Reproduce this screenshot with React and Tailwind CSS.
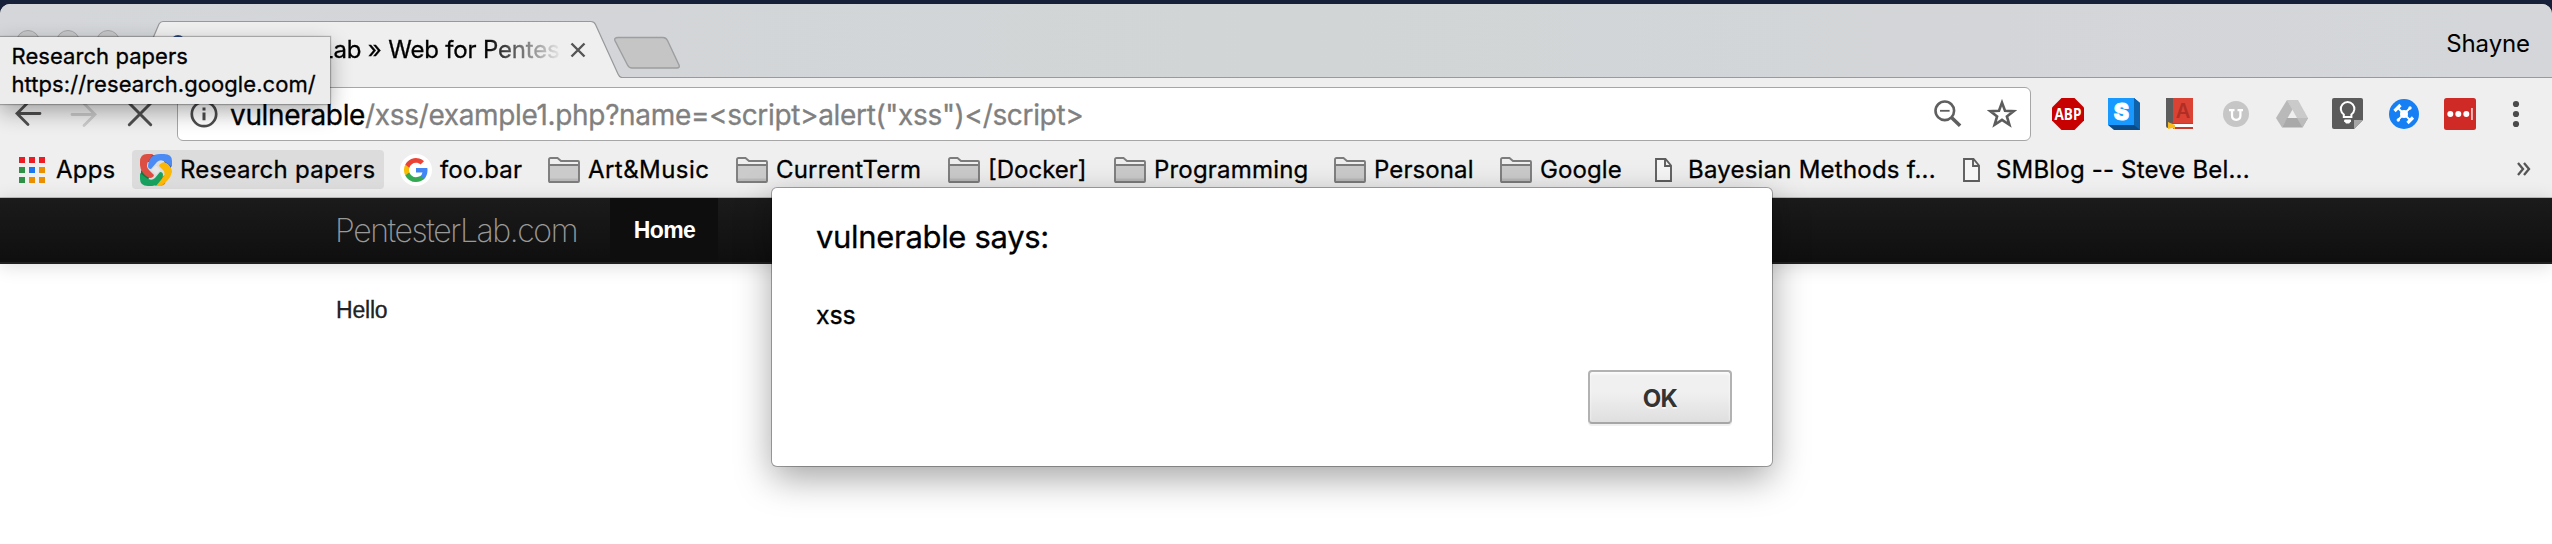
import React from 'react';

const BackIcon = ({ className }) => (
  <svg viewBox="0 0 28 28" className={`h-7 w-7 shrink-0 ${className}`} fill="none" stroke="currentColor" strokeWidth="2.8" strokeLinecap="round">
    <path d="M26 13.5H3M14 2.5L3 13.5l11 11" />
  </svg>
);

const StopIcon = () => (
  <svg viewBox="0 0 28 28" className="h-7 w-7 shrink-0 text-[#4f4f4f]" fill="none" stroke="currentColor" strokeWidth="3" strokeLinecap="round">
    <path d="M3.3 3.3l21.4 21.4M24.7 3.3L3.3 24.7" />
  </svg>
);

const InfoIcon = () => (
  <svg viewBox="0 0 28 28" className="h-7 w-7 shrink-0" fill="none" stroke="#4c4c4c" strokeWidth="2.7">
    <circle cx="14" cy="14" r="12.2" />
    <path d="M14 12.4v7.8M14 7.6v3" strokeWidth="3" />
  </svg>
);

const ZoomOutIcon = () => (
  <svg viewBox="0 0 28 28" className="h-7 w-7 shrink-0" fill="none" stroke="#5f5f5f" strokeWidth="2.6">
    <circle cx="10.8" cy="10.8" r="9.3" />
    <path d="M6 10.8h9.6" strokeWidth="1.8" />
    <path d="M17.5 17.5l8.6 8.3" strokeWidth="3.6" />
  </svg>
);

const StarIcon = () => (
  <svg viewBox="0 0 30 30" className="h-[30px] w-[30px] shrink-0" fill="none" stroke="#5c5c5c" strokeWidth="2.6">
    <path d="M15 3.6l3 8.2 8.8.3-6.9 5.3 2.5 8.4-7.4-4.9-7.4 4.9 2.5-8.4-6.9-5.3 8.8-.3z" />
  </svg>
);

const AppsIcon = () => (
  <svg viewBox="0 0 26 26" className="h-[26px] w-[26px] shrink-0">
    <path fill="#ed1c24" d="M0 0h6v6H0zM10 0h6v6h-6zM20 0h6v6h-6z" />
    <path fill="#2f9146" d="M0 10h6v6H0zM0 20h6v6H0z" />
    <path fill="#1c76f2" d="M10 10h6v6h-6z" />
    <path fill="#ea8f00" d="M20 10h6v6h-6zM10 20h6v6h-6zM20 20h6v6h-6z" />
  </svg>
);

const ResearchIcon = () => (
  <svg viewBox="0 0 32 32" className="h-8 w-8 shrink-0">
    <path fill="#b5382c" d="M8 1h9l-5 7H6z" />
    <path fill="#2a56c6" d="M31 9v9l-5-5-2-6z" />
    <path fill="#f57c00" d="M25 30q-4 3-10 2l6-9 6-3z" />
    <path fill="#0a7a43" d="M1 16q-1 10 5 14l4-8z" />
    <path fill="#17a05e" d="M23 21q-1 11-11 11H8q-8 0-8-7v-6l5 4q6 5 10 1l5-6q3 0 3 3z" />
    <path fill="#f9b707" d="M22 9q2-2 6 1 4 4 4 8-1 5-5 9l-6 5h-5l5-6q6-6 2-10l-4-4q0-2 3-3z" />
    <path fill="#4a8af4" d="M8 12Q9 0 20 0h4q8 0 8 7v6l-5-4q-6-5-10-1l-6 7q-3 0-3-3z" />
    <path fill="#dc4e41" d="M11 24q-4 0-8-5-3-4-3-8V8q0-8 7-8h6L9 6q-4 6 0 10l5 5q0 2-3 3z" />
    <path fill="#e6e6e6" d="M16 11.500l4.500 4.500-4.500 4.500-4.500-4.500z" />
  </svg>
);

const GoogleIcon = () => (
  <svg viewBox="0 0 32 32" className="h-8 w-8 shrink-0">
    <circle cx="16" cy="16" r="16" fill="#fff" />
    <g transform="translate(4 4)">
      <path fill="#4285f4" d="M23.5 12.3c0-.8-.1-1.6-.2-2.3H12v4.6h6.5a5.5 5.5 0 0 1-2.4 3.6v3h3.9c2.2-2.1 3.5-5.1 3.5-8.9z" />
      <path fill="#34a853" d="M12 24c3.200 0 6-1.100 8-2.900l-3.900-3c-1.100.7-2.500 1.200-4.100 1.200-3.100 0-5.800-2.100-6.700-5H1.300v3.100A12 12 0 0 0 12 24z" />
      <path fill="#fbbc05" d="M5.300 14.300a7.200 7.200 0 0 1 0-4.600V6.600H1.300a12 12 0 0 0 0 10.800z" />
      <path fill="#ea4335" d="M12 4.800c1.800 0 3.300.6 4.600 1.800L20 3.200A12 12 0 0 0 1.300 6.600l4 3.100c.9-2.800 3.600-4.900 6.700-4.900z" />
    </g>
  </svg>
);

const FolderIcon = () => (
  <svg viewBox="0 0 32 26" className="h-[26px] w-8 shrink-0">
    <path d="M1 7.500h30V25H1z" fill="#cbcbcb" />
    <path d="M1 21.500h30V25H1z" fill="#b8b8b8" />
    <path d="M1 24V2.500Q1 1 2.500 1h7L13 4h17q1 0 1 1v19q0 1-1 1H2q-1 0-1-1zM1 8h30" fill="none" stroke="#7c7c7c" strokeWidth="1.900" />
  </svg>
);

const PageIcon = () => (
  <svg viewBox="0 0 18 24" className="h-6 w-[18px] shrink-0" fill="#f6f6f6" stroke="#5d5d5d" strokeWidth="1.900">
    <path d="M1 1h9.500L16 7.500V23H1zM10 1v7h6" />
  </svg>
);

const AbpIcon = () => (
  <svg viewBox="0 0 32 32" className="h-8 w-8 shrink-0">
    <path d="M9.500 0h13L32 9.500v13L22.500 32h-13L0 22.500v-13z" fill="#c70000" />
    <text x="16" y="21.500" textAnchor="middle" textLength="27" lengthAdjust="spacingAndGlyphs" fontSize="15.500" fontWeight="700" fill="#fff" stroke="none" className="font-['Open_Sans',sans-serif]">ABP</text>
  </svg>
);

const SIcon = () => (
  <svg viewBox="0 0 32 32" className="h-8 w-8 shrink-0">
    <path d="M26 0l6 5v27H6l-6-5z" fill="#0a4a86" />
    <path d="M26 0l6 5v27l-6-5z" fill="#0d62ab" />
    <path d="M0 0h26v27H0z" fill="#1799ff" />
    <text x="13.300" y="21.500" textAnchor="middle" fontSize="23" fontWeight="900" fill="#fff" stroke="#fff" strokeWidth="0.800" className="font-['Inter',sans-serif]">S</text>
  </svg>
);

const BookIcon = () => (
  <svg viewBox="0 0 28 32" className="h-8 w-7 shrink-0">
    <path d="M0 0h7v30H2q-2 0-2-2z" fill="#5c5c5c" />
    <path d="M6 25h21v4H6z" fill="#fafafa" />
    <path d="M5 24.500h22v1.500H5zM7 29h20v2H7z" fill="#c53a2c" />
    <path d="M7 0h20v25H7z" fill="#dc4234" />
    <text x="17" y="20" textAnchor="middle" fontSize="20" fontWeight="600" fill="#b02e24" className="font-['Inter',sans-serif]">A</text>
    <path d="M2 24l7 3v4l-3-1-4 1z" fill="#f8bc1c" />
  </svg>
);

const UIcon = () => (
  <svg viewBox="0 0 26 26" className="h-[26px] w-[26px] shrink-0">
    <circle cx="13" cy="13" r="13" fill="#c6c6c6" />
    <path d="M6 9.200h5.500M14.500 9.200H20M9 9.200v5.300q0 4.300 4.200 4.300t4.200-4.300V9.200" fill="none" stroke="#fff" strokeWidth="2.300" />
  </svg>
);

const DriveIcon = () => (
  <svg viewBox="0 0 32 28" className="h-7 w-8 shrink-0">
    <path d="M11 0h11l10 18H21z" fill="#cacaca" />
    <path d="M11 0l5.500 9.500L6 27.500 0 18z" fill="#b9b9b9" />
    <path d="M11 18h21l-5.500 9.500H6z" fill="#a9a9a9" />
    <path d="M21 18h11l-5.500 9.500z" fill="#bcbcbc" />
  </svg>
);

const KeepIcon = () => (
  <svg viewBox="0 0 32 32" className="h-8 w-8 shrink-0">
    <path d="M2 0h27q2 0 2 2v20l-9 9H2q-2 0-2-2V2q0-2 2-2z" fill="#5b5b5b" />
    <path d="M22 31v-9h9z" fill="#a5a5a5" />
    <path d="M11.800 19v-2.500a6.800 6.800 0 1 1 7.600 0V19zM12.300 23h6.600" fill="none" stroke="#fff" strokeWidth="2" />
    <path d="M12.500 21.500h6.200v2l-1.500 2h-3.200l-1.500-2z" fill="#fff" />
  </svg>
);

const HubIcon = () => (
  <svg viewBox="0 0 30 30" className="h-[30px] w-[30px] shrink-0">
    <circle cx="15" cy="15" r="15" fill="#157ff3" />
    <g stroke="#fff" fill="#fff">
      <circle cx="15" cy="15" r="4" stroke="none" />
      <path d="M9 9l12 12M20.500 9.500l-11 11" strokeWidth="1.800" />
      <path d="M5.500 12l6-6M18.500 24l5.500-5.500" strokeWidth="3.200" />
      <circle cx="21" cy="9" r="1.700" stroke="none" />
      <circle cx="9.300" cy="21" r="1.700" stroke="none" />
    </g>
  </svg>
);

const PassIcon = () => (
  <svg viewBox="0 0 32 32" className="h-8 w-8 shrink-0">
    <rect width="32" height="32" rx="2.500" fill="#cf2a25" />
    <g fill="#fff">
      <circle cx="6.300" cy="16" r="3" />
      <circle cx="14.300" cy="16" r="3" />
      <circle cx="22.300" cy="16" r="3" />
      <path d="M27.300 10h1.300v12h-1.300z" />
    </g>
  </svg>
);

const MenuIcon = () => (
  <svg viewBox="0 0 8 28" className="h-7 w-2 shrink-0" fill="#4b4b4b">
    <circle cx="4" cy="4" r="3.100" />
    <circle cx="4" cy="14" r="3.100" />
    <circle cx="4" cy="24" r="3.100" />
  </svg>
);

const extensions = [AbpIcon, SIcon, BookIcon, UIcon, DriveIcon, KeepIcon, HubIcon, PassIcon, MenuIcon];

const folders = [
  { label: 'Art&Music', width: 'w-[188px]', tracking: 'tracking-[0.45px]' },
  { label: 'CurrentTerm', width: 'w-[212px]', tracking: 'tracking-[0.2px]' },
  { label: '[Docker]', width: 'w-[166px]', tracking: '' },
  { label: 'Programming', width: 'w-[220px]', tracking: 'tracking-[0.2px]' },
  { label: 'Personal', width: 'w-[166px]', tracking: 'tracking-[0.1px]' },
  { label: 'Google', width: 'w-[155px]', tracking: 'tracking-[0.1px]' },
];

function TabStrip() {
  return (
    <div className="flex h-[74px] items-start rounded-t-[10px] bg-linear-to-r from-[#d4d6da] via-[#d2d5d6] to-[#d4d6da] shadow-[inset_0_-1px_0_#989a9b]">
      <div className="flex w-[136px] gap-4 pt-[26px] pl-4">
        <span className="h-6 w-6 rounded-full border border-[#a4a5a6] bg-[#c6c7c8]" />
        <span className="h-6 w-6 rounded-full border border-[#a4a5a6] bg-[#c6c7c8]" />
        <span className="h-6 w-6 rounded-full border border-[#a4a5a6] bg-[#c6c7c8]" />
      </div>
      <div className="relative h-[74px] w-[478px]">
        <svg viewBox="0 0 486 74" className="absolute top-0 left-0 h-[74px] w-[486px]">
          <path d="M0 74L23 20q1.500-2.500 4-2.500h428q3 0 4.500 3L482 70q1.500 3.500 4 3.500V74z" fill="#efefef" />
          <path d="M0 74L23 20q1.500-2.500 4-2.500h428q3 0 4.500 3L482 70q1.500 3.500 4 3.500" fill="none" stroke="#96989a" strokeWidth="1.200" />
          <circle cx="42" cy="38" r="7" fill="#2c4f96" />
        </svg>
        <div className="relative flex h-[91px] items-center pl-[71px]">
          <div className="w-[356px] mask-r-from-78% mask-r-to-100% pl-[6px] text-2xl leading-none tracking-[-0.18px] whitespace-nowrap">
            PentesterLab » Web for Pentes
          </div>
          <svg viewBox="0 0 16 16" className="ml-[7px] h-4 w-4" stroke="#555" strokeWidth="2.400">
            <path d="M1.500 1.500l13 13M14.500 1.500l-13 13" />
          </svg>
        </div>
      </div>
      <svg viewBox="0 0 68 34" className="mt-8 h-[34px] w-[68px]">
        <path d="M4 1.500h45q3 0 4.500 3L65 29q1 3-2 3H18q-3 0-4.500-3L.9 4.500Q0 1.500 4 1.500z" fill="#c5c5c5" stroke="#9c9e9f" strokeWidth="1.400" />
      </svg>
      <div className="flex h-[79px] flex-1 items-center justify-end pr-[22px] text-2xl leading-none tracking-[-0.1px] [-webkit-text-stroke-width:0]">Shayne</div>
    </div>
  );
}

function Toolbar() {
  return (
    <div className="flex h-[72px] items-center pl-3.5">
      <BackIcon className="text-[#4f4f4f]" />
      <BackIcon className="ml-7 rotate-180 text-[#cbcbcb]" />
      <span className="ml-7 flex"><StopIcon /></span>
      <div className="ml-[23px] flex h-[54px] w-[1854px] items-center rounded-[6px] border border-[#a6a6a6] bg-white pr-[13px] pl-3">
        <InfoIcon />
        <div className="flex-1 pt-px pl-[12px] text-[28px] leading-none tracking-[-0.34px] whitespace-nowrap text-[#808080]">
          <span className="text-black">vulnerable</span>/xss/example1.php?name=&lt;script&gt;alert("xss")&lt;/script&gt;
        </div>
        <ZoomOutIcon />
        <span className="ml-[25px] flex"><StarIcon /></span>
      </div>
      <div className="ml-[9px] flex flex-1">
        {extensions.map((Icon, i) => (
          <div key={i} className="flex w-14 shrink-0 items-center justify-center">
            <Icon />
          </div>
        ))}
      </div>
    </div>
  );
}

function BookmarkBar() {
  return (
    <div className="flex h-12 items-start border-b border-[#bfbfbf] text-2xl leading-none whitespace-nowrap text-black">
      <div className="flex h-[39px] w-[132px] items-center pl-[19px]">
        <AppsIcon />
        <span className="pl-[11px] tracking-[0.2px]">Apps</span>
      </div>
      <div className="flex h-[39px] w-[252px] items-center rounded-[4px] bg-[#dcdcdc] pl-2">
        <ResearchIcon />
        <span className="pl-[8px] tracking-[0.25px]">Research papers</span>
      </div>
      <div className="flex h-[39px] w-[164px] items-center pl-4">
        <GoogleIcon />
        <span className="pl-2 tracking-[0.1px]">foo.bar</span>
      </div>
      {folders.map((f) => (
        <div key={f.label} className={`flex h-[39px] shrink-0 items-center ${f.width}`}>
          <FolderIcon />
          <span className={`pl-2 ${f.tracking}`}>{f.label}</span>
        </div>
      ))}
      <div className="flex h-[39px] w-[308px] items-center">
        <PageIcon />
        <span className="pl-[15px] tracking-[0.22px]">Bayesian Methods f...</span>
      </div>
      <div className="flex h-[39px] items-center">
        <PageIcon />
        <span className="pl-[15px] tracking-[0.18px]">SMBlog -- Steve Bel...</span>
      </div>
      <svg viewBox="0 0 14 14" className="mt-3 mr-[21px] ml-auto h-3.5 w-3.5" fill="none" stroke="#555" strokeWidth="2.300">
        <path d="M1 1l5 6-5 6M7 1l5 6-5 6" />
      </svg>
    </div>
  );
}

function Page() {
  return (
    <div className="flex-1 bg-white font-['Liberation_Sans',Arial,sans-serif]">
      <div className="flex h-[66px] border-b-2 border-[#202020] bg-linear-to-b from-[#1b1b1b] to-[#0f0f0f] pl-[335px] shadow-[0_2px_18px_rgba(0,0,0,0.14)]">
        <div className="flex w-[275px] items-center pt-px font-['Inter',sans-serif] text-[32px] leading-none font-extralight tracking-[-1.42px] text-[#999] [-webkit-text-stroke-width:0]">PentesterLab.com</div>
        <div className="flex w-[108px] items-center justify-center bg-[#0e0e0e] pl-px text-[23px] leading-none font-bold tracking-[-0.6px] text-white [-webkit-text-stroke-width:0]">Home</div>
      </div>
      <div className="pt-7 pl-[336px] text-[23px] leading-9 tracking-[-0.2px] text-[#222]">Hello</div>
    </div>
  );
}

function Tooltip() {
  return (
    <div className="absolute top-[37px] left-0 h-[67px] w-[330px] bg-[#ececec] pt-[5px] pl-[11.5px] text-[22px] leading-7 tracking-[0.06px] whitespace-nowrap text-black shadow-[0_0_1px_1px_rgba(0,0,0,0.25),0_8px_22px_rgba(0,0,0,0.32)]">
      <div>Research papers</div>
      <div>https://research.google.com/</div>
    </div>
  );
}

function AlertDialog() {
  return (
    <div className="absolute top-[188px] left-[772px] flex h-[278px] w-[1000px] flex-col rounded-[5px] bg-white pt-[30px] pr-10 pl-[44px] text-black shadow-[0_0_0_1px_rgba(0,0,0,0.3),0_12px_36px_rgba(0,0,0,0.36)]">
      <div className="text-[31px] leading-[38px] tracking-[-0.32px]">vulnerable says:</div>
      <div className="mt-[43px] text-[25px] leading-8 tracking-[-0.2px]">xss</div>
      <button className="mt-[39px] h-[54px] w-[144px] self-end rounded-[4px] border-2 border-[#b2b2b2] border-b-[#a6a6a6] bg-linear-to-b from-[#f0f0f0] from-40% to-[#dfdfdf] pt-[3px] text-2xl leading-none font-bold tracking-[-0.6px] text-[#333] shadow-[0_2px_0_rgba(0,0,0,0.06),inset_0_2px_3px_rgba(255,255,255,0.8)] text-shadow-[0_2px_0_#f4f4f4] [-webkit-text-stroke-width:0]">OK</button>
    </div>
  );
}

export default function App() {
  return (
    <div className="relative flex h-[544px] w-[2552px] flex-col overflow-hidden bg-[#162038] pt-1 font-['Inter','Noto_Sans',sans-serif] text-black [-webkit-text-stroke-width:0.3px]">
      <div className="flex flex-1 flex-col rounded-t-[10px] bg-[#efefef]">
        <TabStrip />
        <Toolbar />
        <BookmarkBar />
        <Page />
      </div>
      <Tooltip />
      <AlertDialog />
    </div>
  );
}
